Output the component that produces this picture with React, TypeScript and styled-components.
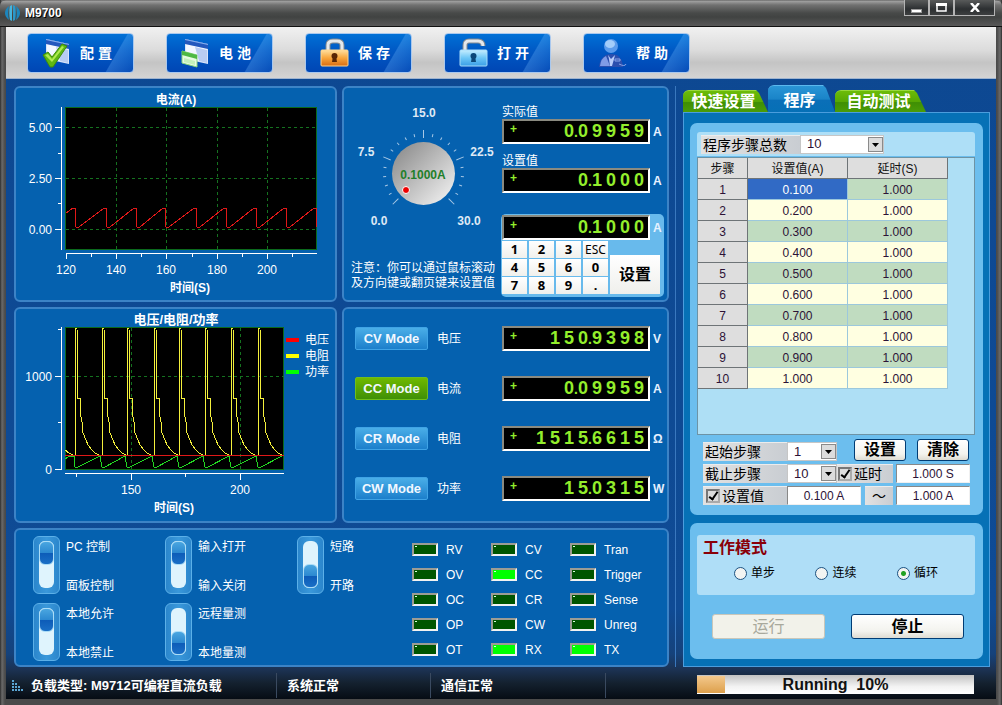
import React from "react";
import styled, { createGlobalStyle, css } from "styled-components";

const GlobalStyle = createGlobalStyle`
  *, *::before, *::after { box-sizing: border-box; }
  body {
    margin: 0;
    background: #3c3c3c;
    font-family: "Liberation Sans", "Noto Sans CJK SC", sans-serif;
    font-size: 12px;
    line-height: 14px;
    color: #fff;
  }
  button, input, select { font: inherit; margin: 0; padding: 0; }
`;

/* ---------- window frame ---------- */

const Window = styled.div`
  display: flex;
  flex-direction: column;
  min-height: 100vh;
  padding: 0 6px 6px;
  background: linear-gradient(90deg, #2c2c2c 0, #6a6a6a 2px, #4a4a4a 5px, #4a4a4a calc(100% - 5px), #6a6a6a calc(100% - 2px), #2c2c2c 100%);
`;

const TitleBar = styled.header`
  display: flex;
  align-items: center;
  gap: 5px;
  height: 27px;
  margin: 0 -6px;
  padding-left: 5px;
  border-radius: 6px 6px 0 0;
  border-bottom: 1px solid #111;
  background: linear-gradient(#555 0, #a2a2a2 1px, #717171 5px, #484a49 13px, #414342 17px, #585858 26px);
`;

const Title = styled.h1`
  flex: 1;
  margin: 0;
  font-size: 12px;
  font-weight: bold;
  text-shadow: 1px 1px 0 #000;
`;

const WindowButtons = styled.div`
  display: flex;
  align-self: flex-start;
  margin-right: 7px;
`;

const WindowButton = styled.button<{ $wide?: boolean }>`
  display: flex;
  align-items: center;
  justify-content: center;
  width: ${(p) => (p.$wide ? 41 : 25)}px;
  height: 16px;
  border: 1px solid #b4b4b4;
  border-top: 0;
  background: linear-gradient(#585a5a, #2c2f31 60%, #3d3f40);
`;

const Content = styled.div`
  flex: 1;
  display: flex;
  flex-direction: column;
  background: linear-gradient(#0d4892 0, #0f4b95 calc(100% - 90px), #15427b calc(100% - 45px), #1c3355 calc(100% - 30px), #14212f calc(100% - 16px), #060c14 100%);
`;

const Toolbar = styled.nav`
  display: flex;
  align-items: center;
  gap: 32px;
  height: 52px;
  padding: 0 21px;
  border-bottom: 1px solid #9fb4d0;
  background: linear-gradient(#f1f1f1, #dcdcdc 45%, #c4c4c4 70%, #d4d4d4);
`;

const ToolButton = styled.button`
  display: flex;
  align-items: center;
  gap: 8px;
  width: 107px;
  height: 40px;
  padding-left: 14px;
  border: 1px solid #a9c8ee;
  border-radius: 4px;
  color: #fff;
  font-size: 14px;
  font-weight: bold;
  line-height: 18px;
  background:
    linear-gradient(120deg, transparent 78%, rgba(120, 190, 255, 0.28) 79%, rgba(120, 190, 255, 0.05) 100%),
    linear-gradient(#0070d6, #0058c4 45%, #0046b4);
`;

const Body = styled.main`
  flex: 1;
  display: grid;
  grid-template-columns: minmax(0, 1fr) 315px;
  gap: 6px;
  padding: 7px 6px 0 8px;
`;

const Bench = styled.div`
  display: grid;
  grid-template-columns: minmax(0, 323fr) minmax(0, 327fr);
  grid-template-rows: 216px 216px 139px;
  gap: 5px;
`;

const Panel = styled.section<{ $wide?: boolean }>`
  display: flex;
  min-width: 0;
  border: 2px solid #3c83c6;
  border-radius: 6px;
  background: #0561af;
  ${(p) => p.$wide && css`grid-column: 1 / -1;`}
`;

/* ---------- charts ---------- */

const ChartSvg = styled.svg`
  display: block;
  flex: none;
  font-size: 12px;
  fill: #fff;
`;

/* ---------- LCD ---------- */

const Lcd = styled.output`
  display: flex;
  flex: none;
  align-items: center;
  width: 148px;
  height: 25px;
  padding: 0 0 0 6px;
  border: 2px solid;
  border-color: #8a8a80 #fff #fff #8a8a80;
  background: #000;
  color: #93ee2c;
  font-size: 18px;
  font-weight: bold;
  line-height: 21px;
`;

const LcdSign = styled.span`
  flex: 1;
  font-size: 12px;
  line-height: 16px;
  align-self: flex-start;
`;

const LcdCell = styled.span`
  display: flex;
  align-items: baseline;
  justify-content: space-between;
  width: 14px;
  height: 21px;
`;

const LcdDot = styled.span`
  width: 4px;
  font-size: 14px;
`;

const Unit = styled.span`
  width: 14px;
  font-weight: bold;
  color: #e6f1ff;
`;

const LcdRow = styled.div`
  display: flex;
  align-items: center;
  gap: 3px;
`;

/* ---------- knob panel ---------- */

const KnobColumn = styled.div`
  flex: 1;
  display: flex;
  flex-direction: column;
  padding: 12px 0 9px 7px;
`;

const Note = styled.p`
  margin: auto 0 0;
  line-height: 15px;
  white-space: nowrap;
`;

const ReadingColumn = styled.div`
  width: 166px;
  padding: 17px 3px 0 0;
`;

const Reading = styled.div`
  margin-bottom: 10px;
  padding-left: 1px;
`;

const ReadingLabel = styled.div`
  height: 14px;
`;

const Keypad = styled.div`
  margin-top: 21px;
  padding: 1px 1px 3px;
  border-radius: 5px;
  background: #68baec;
`;

const KeypadKeys = styled.div`
  display: flex;
  gap: 2px;
  align-items: flex-end;
  margin-top: 1px;
`;

const KeyGrid = styled.div`
  display: grid;
  grid-template-columns: repeat(4, 25px);
  grid-auto-rows: 17px;
  gap: 1px 2px;
`;

const Key = styled.button<{ $text?: boolean }>`
  border: 0;
  background: linear-gradient(#fff, #f0f0ec);
  color: #000;
  font-family: "Noto Sans", sans-serif;
  font-size: ${(p) => (p.$text ? 12 : 13)}px;
  font-weight: ${(p) => (p.$text ? "normal" : "bold")};
  line-height: 17px;
`;

const SetKey = styled.button`
  width: 50px;
  height: 39px;
  border: 0;
  background: linear-gradient(#fff, #efefec);
  color: #000;
  font-size: 16px;
  font-weight: bold;
`;

/* ---------- mode panel ---------- */

const ModeList = styled.div`
  flex: 1;
  display: flex;
  flex-direction: column;
  gap: 25px;
  padding: 17px 0 0 11px;
`;

const ModeRow = styled.div`
  display: flex;
  align-items: center;
  height: 25px;
`;

const ModeButton = styled.button<{ $active: boolean }>`
  width: 73px;
  height: 23px;
  border: 1px solid ${(p) => (p.$active ? "#6fbe1c" : "#3fa3e6")};
  border-radius: 2px;
  color: #f2f8ff;
  font-size: 13px;
  font-weight: bold;
  background: ${(p) => (p.$active ? "linear-gradient(#6fb900, #3f8f06)" : "linear-gradient(#4aaee8, #1c7fcb)")};
`;

const ModeName = styled.span`
  flex: 1;
  padding-left: 9px;
`;

const ModeValue = styled.div`
  width: 165px;
`;

/* ---------- switches and lamps ---------- */

const SwitchGrid = styled.div`
  display: grid;
  grid-template-columns: repeat(3, 132px);
  grid-auto-rows: 58px;
  gap: 9px 0;
  padding: 6px 0 0 17px;
  width: 396px;
  flex: none;
`;

const SwitchLabel = styled.label`
  display: flex;
  gap: 6px;
`;

const SwitchInput = styled.input`
  appearance: none;
  position: relative;
  width: 27px;
  height: 58px;
  border: 1px solid #5cb0e8;
  border-radius: 6px;
  background: linear-gradient(90deg, #2b86cc, #3a98da 50%, #2b86cc);

  &::before {
    content: "";
    position: absolute;
    inset: 4px 5px 5px;
    border-radius: 6px;
    background: #dff4fd;
  }
  &::after {
    content: "";
    position: absolute;
    left: 5px;
    top: 27px;
    width: 15px;
    height: 24px;
    border: 1px solid #a9dcf7;
    border-radius: 6px;
    background: linear-gradient(#4aa6e0, #2b88d0 50%, #0d5cb8 51%, #1a6fc6);
  }
  &:checked::after {
    top: 4px;
  }
`;

const SwitchTexts = styled.span`
  display: flex;
  flex-direction: column;
  justify-content: space-between;
  padding: 4px 0 1px;
`;

const LampGrid = styled.div`
  display: grid;
  grid-template-columns: repeat(3, 79px);
  grid-auto-rows: 25px;
  padding-top: 7px;
`;

const Lamp = styled.div`
  display: flex;
  align-items: center;
  gap: 8px;
  height: 25px;
`;

const LampLight = styled.span<{ $on: boolean }>`
  width: 26px;
  height: 13px;
  border: 2px solid;
  border-color: #9c9c94 #f2f2f2 #f2f2f2 #9c9c94;
  background: ${(p) => (p.$on ? "#00ff00" : "#005500")};
  &::before {
    content: "";
    display: block;
    width: 2px;
    height: 1px;
    margin: 1px;
    background: #d8ffd8;
  }
`;

const LampName = styled.span`
  padding-top: 1px;
`;

/* ---------- sidebar ---------- */

const Sidebar = styled.aside`
  display: flex;
  flex-direction: column;
  padding-left: 7px;
  border-left: 1px solid #3a78be;
`;

const Tabs = styled.div`
  display: flex;
  align-items: flex-end;
  height: 26px;
`;

const Tab = styled.button<{ $active?: boolean; $width: number }>`
  position: relative;
  isolation: isolate;
  width: ${(p) => p.$width}px;
  height: ${(p) => (p.$active ? 27 : 22)}px;
  padding-right: 4px;
  padding-top: ${(p) => (p.$active ? 5 : 1)}px;
  border: 0;
  background: none;
  color: #fff;
  font-size: 16px;
  font-weight: bold;
  line-height: 20px;
  white-space: nowrap;
  &::before {
    content: "";
    position: absolute;
    z-index: -1;
    inset: 0;
    border-top: 1px solid ${(p) => (p.$active ? "#5cb8ee" : "#97d83a")};
    border-radius: 6px 8px 0 0;
    clip-path: polygon(0 0, calc(100% - 12px) 0, calc(100% - 9px) 3px, 100% 100%, 0 100%);
    background: ${(p) =>
      p.$active ? "linear-gradient(#2a95d6, #1a84c8 50%, #0a6fb8 55%, #0670b6)" : "linear-gradient(#6cbc08, #57a804 50%, #3f8f04 55%, #4a9c08)"};
  }
`;

const SidePanel = styled.div`
  flex: 1;
  display: flex;
  flex-direction: column;
  gap: 8px;
  padding: 10px 6px 7px;
  border: 1px solid #4b9ddd;
  background: #0671b6;
`;

const Card = styled.section`
  padding: 9px 8px 10px 7px;
  border-radius: 7px;
  background: #6cbeee;
`;

const ModeCard = styled(Card)`
  flex: 1;
  padding-top: 12px;
`;

const Strip = styled.div`
  display: flex;
  align-items: center;
  height: 24px;
  margin-bottom: 1px;
  padding-left: 4px;
  border-radius: 3px 3px 0 0;
  background: #aedff7;
`;

const greyField = css`
  border-top: 1px solid #ececec;
  background: linear-gradient(90deg, #e2e2e2, #c9cdd2);
  color: #000;
  font-size: 14px;
  line-height: 18px;
`;

const StripLabel = styled.label`
  ${greyField}
  width: 99px;
  height: 19px;
  padding-left: 2px;
`;

const FieldLabel = styled.label`
  ${greyField}
  display: flex;
  align-items: center;
  width: 84px;
  height: 19px;
  padding-left: 2px;
  white-space: nowrap;
`;

const DelayLabel = styled(FieldLabel)`
  width: 56px;
  margin-right: 3px;
  padding-left: 0;
`;

const SelectBox = styled.span<{ $width: number }>`
  position: relative;
  display: inline-flex;
  width: ${(p) => p.$width}px;
  height: 19px;
  svg {
    position: absolute;
    right: 1px;
    top: 2px;
    pointer-events: none;
  }
`;

const Select = styled.select`
  appearance: none;
  width: 100%;
  height: 19px;
  padding-left: 6px;
  border: 1px solid #c6c6c6;
  border-radius: 0;
  background: #fff;
  color: #2c1236;
  font-size: 13px;
`;

const TableBox = styled.div`
  min-height: 278px;
  margin-bottom: 4px;
  border: 1px solid #6d93a5;
  background: #aedff5;
`;

const StepTable = styled.table`
  width: 250px;
  table-layout: fixed;
  border-collapse: separate;
  border-spacing: 0;
  text-align: center;
  th, td {
    height: 21px;
    padding: 2px 0 0;
    border-right: 1px solid #9cc8dc;
    border-bottom: 1px solid #9cc8dc;
    font-size: 12px;
    font-weight: normal;
    line-height: 18px;
  }
  th {
    border-color: #6e7477;
    background: #dedede;
    color: #2c1236;
  }
  thead th { color: #111; }
`;

const Cell = styled.td<{ $tone: "odd" | "even" | "selected" }>`
  background: ${(p) => ({ odd: "#c0dcc0", even: "#ffffe1", selected: "#316ac5" })[p.$tone]};
  color: ${(p) => (p.$tone === "selected" ? "#fff" : "#2c1236")};
`;

const FieldRow = styled.div`
  display: flex;
  align-items: flex-end;
  padding-left: 6px;
  margin-bottom: 3px;
  &:last-child { margin-bottom: 0; }
`;

const Check = styled.input`
  appearance: none;
  position: relative;
  width: 14px;
  height: 14px;
  margin: 0 2px 0 1px;
  border: 2px solid #8c8c8c;
  border-color: #777 #aaa #aaa #777;
  background: #dcdcdc;
  &:checked::after {
    content: "";
    position: absolute;
    left: 3px;
    top: -1px;
    width: 5px;
    height: 10px;
    border: solid #000;
    border-width: 0 2px 2px 0;
    transform: rotate(35deg);
  }
`;

const NumberBox = styled.input`
  width: 74px;
  height: 19px;
  border: 1px solid #f0f0f0;
  border-top-color: #888;
  border-left-color: #888;
  border-radius: 0;
  background: #fff;
  color: #2c1236;
  text-align: center;
`;

const Tilde = styled.span`
  ${greyField}
  width: 28px;
  height: 19px;
  margin: 0 3px 0 4px;
  text-align: center;
`;

const PushButton = styled.button<{ $large?: boolean }>`
  width: ${(p) => (p.$large ? 113 : 52)}px;
  height: ${(p) => (p.$large ? 25 : 22)}px;
  border: 1px solid #003c74;
  border-radius: 3px;
  background: linear-gradient(#fff, #f3f3ee 70%, #dedcd2);
  color: #000;
  font-size: 16px;
  font-weight: bold;
  line-height: 20px;
  &:disabled {
    border-color: #c9c7ba;
    background: #f2f2ea;
    color: #a9a99c;
    font-weight: normal;
  }
`;

const ButtonPair = styled.div`
  display: flex;
  gap: 11px;
  margin-left: 17px;
`;

const RunButtons = styled.div`
  display: flex;
  gap: 26px;
  padding: 19px 0 0 15px;
`;

const ModeGroup = styled.fieldset`
  height: 60px;
  margin: 0;
  padding: 2px 6px 0;
  border: 0;
  border-radius: 3px;
  background: #afdef7;
`;

const ModeLegend = styled.div`
  color: #8a0008;
  font-size: 16px;
  font-weight: bold;
  line-height: 22px;
`;

const RadioRow = styled.div`
  display: flex;
  justify-content: space-between;
  padding: 7px 31px 0;
`;

const RadioLabel = styled.label`
  display: flex;
  align-items: center;
  gap: 4px;
  color: #000;
`;

const Radio = styled.input`
  appearance: none;
  width: 13px;
  height: 13px;
  border: 1px solid #1d5281;
  border-radius: 50%;
  background: #f2f4f2;
  &:checked {
    background: radial-gradient(circle, #21a121 0 2px, #f2f4f2 3px);
  }
`;

/* ---------- status bar ---------- */

const StatusBar = styled.footer`
  display: flex;
  align-items: center;
  height: 32px;
  padding: 5px 22px 0 6px;
  font-size: 13px;
  font-weight: bold;
`;

const StatusCell = styled.div<{ $width: number }>`
  display: flex;
  flex: none;
  align-items: center;
  gap: 7px;
  width: ${(p) => p.$width}px;
  height: 25px;
  padding-left: 10px;
  border-left: 1px solid #3a4a60;
  &:first-child {
    padding-left: 0;
    border-left: 0;
  }
`;

const Progress = styled.div`
  position: relative;
  width: 277px;
  height: 19px;
  margin: 0 0 2px auto;
  background: linear-gradient(#c2c2c2, #f2f2f2 60%, #fff);
  text-align: center;
  color: #111;
  font-size: 16px;
  line-height: 19px;
  white-space: pre;
`;

const ProgressFill = styled.span`
  position: absolute;
  inset: 1px auto 1px 0;
  background: linear-gradient(#f3c88c, #dda04c);
`;

/* ---------- data ---------- */

const readings = [
  { mode: "CV Mode", name: "电压", value: "150.9398", unit: "V", active: false },
  { mode: "CC Mode", name: "电流", value: "0.09959", unit: "A", active: true },
  { mode: "CR Mode", name: "电阻", value: "1515.6615", unit: "Ω", active: false },
  { mode: "CW Mode", name: "功率", value: "15.0315", unit: "W", active: false },
];

const switches: { up: string; down: string; isUp: boolean }[] = [
  { up: "PC 控制", down: "面板控制", isUp: true },
  { up: "输入打开", down: "输入关闭", isUp: true },
  { up: "短路", down: "开路", isUp: false },
  { up: "本地允许", down: "本地禁止", isUp: true },
  { up: "远程量测", down: "本地量测", isUp: false },
];

const lamps = ["RV", "CV", "Tran", "OV", "CC", "Trigger", "OC", "CR", "Sense", "OP", "CW", "Unreg", "OT", "RX", "TX"];
const litLamps = new Set(["CC", "RX", "TX"]);

const keys = ["1", "2", "3", "ESC", "4", "5", "6", "0", "7", "8", "9", "."];

const steps = Array.from({ length: 10 }, (_, i) => ({
  index: i + 1,
  value: ((i + 1) / 10).toFixed(3),
  delay: "1.000",
}));

/* ---------- drawings ---------- */

const Logo = () => (
  <svg width="15" height="16" viewBox="0 0 15 16" aria-hidden="true">
    <path d="M4 1C1 3 0 6 0 8s1 5 4 7c-1-4-1-10 0-14z" fill="#1c86bd" />
    <path d="M11 1c3 2 4 5 4 7s-1 5-4 7c1-4 1-10 0-14z" fill="#1c86bd" />
    <path d="M5 1C4 5 4 11 5 15l2 1V0z" fill="#46b4dd" />
    <path d="M10 1c1 4 1 10 0 14l-2 1V0z" fill="#2c98c9" />
  </svg>
);

const WindowShape = () => (
  <>
    <path d="M4 1l23 5v20L4 21z" fill="#d8e4fb" />
    <path d="M5 6l21 5v14L5 20z" fill="#f3f7ff" />
    <path d="M14 9l12 3v13l-8-2z" fill="#b9ccf2" />
    <path d="M4 1l23 5v5L4 6z" fill="#2458bd" />
    <path d="M4 1l23 5v1L4 2z" fill="#86b0f0" />
  </>
);

const ConfigIcon = () => (
  <svg width="30" height="30" viewBox="0 0 30 30" aria-hidden="true">
    <WindowShape />
    <path d="M1 17l5-3 4 5L20 6l5 2-14 21H8z" fill="#5fb812" stroke="#3e8c08" />
    <path d="M3 17l3-1 4 5L20 8l2 1-12 15z" fill="#b0ea4e" />
  </svg>
);

const BatteryIcon = () => (
  <svg width="30" height="30" viewBox="0 0 30 30" aria-hidden="true">
    <WindowShape />
    <path d="M1 13l15 4v12L1 25z" fill="#e6fbe0" stroke="#8bd67c" />
    <path d="M1 13l15 4v4L1 17z" fill="#4fb944" />
    <path d="M3 20l11 3v4L3 24z" fill="#c4f0bb" />
  </svg>
);

const LockIcon = ({ open }: { open?: boolean }) => {
  const id = open ? "lock-open" : "lock-shut";
  const shackle = open ? "M6 12V7q0-4 4-4h9q5 0 5 5" : "M8 13V7q0-4 5-4h4q5 0 5 4v6";
  return (
    <svg width="30" height="30" viewBox="0 0 30 30" aria-hidden="true">
      <defs>
        <linearGradient id={id} x1="0" y1="0" x2="0" y2="1">
          <stop offset="0" stopColor={open ? "#c6eeff" : "#ffe0a0"} />
          <stop offset="0.5" stopColor={open ? "#6cc6f6" : "#f8a63c"} />
          <stop offset="1" stopColor={open ? "#3a9ee6" : "#d96c12"} />
        </linearGradient>
      </defs>
      <path d={shackle} fill="none" stroke="#7f8790" strokeWidth="5" />
      <path d={shackle} fill="none" stroke="#e4e8ec" strokeWidth="3" />
      <rect x="1" y="12" width="27" height="16" rx="1" fill={`url(#${id})`} stroke={open ? "#a6dcfa" : "#ffd48c"} />
      <circle cx="14.5" cy="18" r="3" fill={open ? "#0b4778" : "#5a2604"} />
      <path d="M13 18h3l1 6h-5z" fill={open ? "#0b4778" : "#5a2604"} />
    </svg>
  );
};

const HelpIcon = () => (
  <svg width="30" height="30" viewBox="0 0 30 30" aria-hidden="true">
    <path d="M1 29q1-9 7-12l5-1h1l5 1q5 3 6 12z" fill="#2c4fae" />
    <path d="M2 28q1-8 6-10l4 10z" fill="#7f9be6" />
    <path d="M10 17l3 4 4-4-1 4-2 7h-2l-1-7z" fill="#b8ccfa" />
    <path d="M17 21h5v2h-5zM21 26q6 3 7 0" fill="none" stroke="#8aa5e8" />
    <circle cx="13" cy="8" r="7" fill="#5c9cec" />
    <ellipse cx="12" cy="6" rx="5" ry="4" fill="#a3cdfa" />
  </svg>
);

const DropArrow = () => (
  <svg width="15" height="15" viewBox="0 0 15 15" aria-hidden="true">
    <rect x="0.5" y="0.5" width="14" height="14" fill="#dcdcdc" stroke="#8a8a8a" />
    <path d="M4 6h7l-3.5 4z" fill="#000" />
  </svg>
);

const sawtooth = () => {
  const peaks = [75, 106, 136, 165, 196, 226, 256, 286, 316];
  const points = ["66,213"];
  peaks.forEach((x, i) => {
    points.push(`${x - 2},208`, `${x},208`, `${x + 1},227`);
    if (i < peaks.length - 1) points.push(`${x + 4},227`);
  });
  return points.join(" ");
};

const rises = [75, 102, 127, 154, 179, 205, 231, 258, 284];
const decay: [number, number][] = [
  [3, 398], [5, 398], [5, 411], [7, 422], [8, 433], [11, 440], [13, 445], [17, 450], [20, 453], [24, 455],
];

const resistanceLine = () => {
  const points = ["65,450", "69,453", "73,455"];
  rises.slice(0, -1).forEach((x) => {
    points.push(`${x},455`, `${x},328`, `${x + 2},328`);
    decay.forEach(([dx, y]) => points.push(`${x + dx},${y}`));
  });
  return points.join(" ");
};

const powerLine = () => {
  const points = ["65,459", "70,456", "74,456"];
  rises.slice(0, -1).forEach((x, i) => {
    points.push(`${x},467`, `${x + 3},467`, `${rises[i + 1] - 2},456`);
  });
  return points.join(" ");
};

const CurrentChart = () => (
  <ChartSvg width="319" height="212" viewBox="16 88 319 212" role="img" aria-label="电流(A)">
    <rect x="65.5" y="107.5" width="251" height="142" fill="#000" stroke="#0b6a1c" />
    <g stroke="#14721f" strokeDasharray="3 3" shapeRendering="crispEdges">
      {[127, 178, 229].map((y) => <path key={y} d={`M66 ${y}.5H317`} />)}
      {[116, 166, 217, 267].map((x) => <path key={x} d={`M${x}.5 108V249`} />)}
    </g>
    <polyline points={sawtooth()} fill="none" stroke="#e01818" shapeRendering="crispEdges" />
    <path
      d="M61.5 107V250M55 127.5h6M55 178.5h6M55 229.5h6M58 153.5h3M58 203.5h3M66 253.5H317M66.5 254v5M116.5 254v5M166.5 254v5M217.5 254v5M267.5 254v5M91.5 254v3M141.5 254v3M192.5 254v3M242.5 254v3M292.5 254v3"
      stroke="#fff"
      fill="none"
    />
    <g textAnchor="end">
      <text x="52" y="132">5.00</text>
      <text x="52" y="183">2.50</text>
      <text x="52" y="234">0.00</text>
    </g>
    <g textAnchor="middle">
      <text x="66" y="274">120</text>
      <text x="116" y="274">140</text>
      <text x="166" y="274">160</text>
      <text x="217" y="274">180</text>
      <text x="267" y="274">200</text>
      <g fontWeight="bold">
        <text x="176" y="104">电流(A)</text>
        <text x="190" y="292">时间(S)</text>
      </g>
    </g>
  </ChartSvg>
);

const PowerChart = () => (
  <ChartSvg width="319" height="212" viewBox="16 309 319 212" role="img" aria-label="电压/电阻/功率">
    <rect x="65.5" y="327.5" width="218" height="142" fill="#000" stroke="#0b6a1c" />
    <path d="M66 376.5H284M131.5 328V469M240.5 328V469" stroke="#14721f" strokeDasharray="3 3" />
    <g fill="none" shapeRendering="crispEdges">
      <polyline points={powerLine()} stroke="#22d822" />
      <polyline points={resistanceLine()} stroke="#f4f03c" />
      <path d="M65 455.5H284" stroke="#e01818" />
    </g>
    <path
      d="M61.5 327V470M58 329.5h3M55 376.5h6M58 422.5h3M55 469.5h6M65 473.5H284M131.5 474v6M240.5 474v6M76.5 474v3M185.5 474v3"
      stroke="#fff"
      fill="none"
    />
    <g textAnchor="end">
      <text x="52" y="381">1000</text>
      <text x="52" y="474">0</text>
    </g>
    <g textAnchor="middle">
      <text x="131" y="494">150</text>
      <text x="240" y="494">200</text>
      <g fontWeight="bold">
        <text x="176" y="324" fontSize="13">电压/电阻/功率</text>
        <text x="174" y="512">时间(S)</text>
      </g>
    </g>
    <rect x="286" y="338" width="13" height="4" fill="#f00" />
    <rect x="286" y="354" width="13" height="4" fill="#ff0" />
    <rect x="286" y="370" width="13" height="4" fill="#0f0" />
    <text x="305" y="344">电压</text>
    <text x="305" y="360">电阻</text>
    <text x="305" y="376">功率</text>
  </ChartSvg>
);

const Knob = () => (
  <ChartSvg width="149" height="132" viewBox="351 100 149 132" role="img" aria-label="0.1000A">
    <defs>
      <linearGradient id="knob-face" x1="0.1" y1="0.1" x2="0.9" y2="0.9">
        <stop offset="0" stopColor="#8f8f8f" />
        <stop offset="1" stopColor="#ececec" />
      </linearGradient>
    </defs>
    <g stroke="#a8c8e6">
      {Array.from({ length: 21 }, (_, i) => {
        const major = i % 5 === 0;
        return (
          <path key={i} d={major ? "M423.5 130v8" : "M423.5 133v3"} transform={`rotate(${-135 + i * 13.5} 423.5 173.5)`} />
        );
      })}
    </g>
    <circle cx="423.5" cy="173.5" r="31.5" fill="url(#knob-face)" />
    <circle cx="406" cy="190" r="3.5" fill="#e00" stroke="#fff" />
    <g textAnchor="middle" fontWeight="bold" fill="#dfe9f5">
      <text x="423" y="179" fill="#1f7f2a">0.1000A</text>
      <text x="424" y="117">15.0</text>
      <text x="366" y="156">7.5</text>
      <text x="482" y="156">22.5</text>
      <text x="379" y="225">0.0</text>
      <text x="469" y="225">30.0</text>
    </g>
  </ChartSvg>
);

const StatusIcon = () => (
  <svg width="12" height="12" viewBox="0 0 12 12" fill="#5ba6d4" aria-hidden="true">
    {[[0, 0], [0, 3], [3, 3], [0, 6], [3, 6], [6, 6], [0, 9], [3, 9], [6, 9], [9, 9]].map(([x, y]) => (
      <rect key={`${x}-${y}`} x={x} y={y} width="2" height="2" />
    ))}
  </svg>
);

/* ---------- composed parts ---------- */

/* Each digit owns one cell; a decimal point shares the cell of the digit before it. */
const Display = ({ value, unit }: { value: string; unit: string }) => (
  <LcdRow>
    <Lcd>
      <LcdSign>+</LcdSign>
      {(value.match(/\d\.?/g) ?? []).map((cell, i) => (
        <LcdCell key={i}>
          <span>{cell[0]}</span>
          {cell[1] && <LcdDot>.</LcdDot>}
        </LcdCell>
      ))}
    </Lcd>
    <Unit>{unit}</Unit>
  </LcdRow>
);

const Dropdown = ({ id, value, width }: { id: string; value: string; width: number }) => (
  <SelectBox $width={width}>
    <Select id={id} defaultValue={value}>
      {steps.map((s) => <option key={s.index}>{s.index}</option>)}
    </Select>
    <DropArrow />
  </SelectBox>
);

const toolbarItems = [
  { text: "配 置", icon: <ConfigIcon /> },
  { text: "电 池", icon: <BatteryIcon /> },
  { text: "保 存", icon: <LockIcon /> },
  { text: "打 开", icon: <LockIcon open /> },
  { text: "帮 助", icon: <HelpIcon /> },
];

export default function App() {
  return (
    <>
      <GlobalStyle />
      <Window>
        <TitleBar>
          <Logo />
          <Title>M9700</Title>
          <WindowButtons>
            <WindowButton aria-label="最小化">
              <svg width="11" height="10"><rect x="0.5" y="6.5" width="10" height="3" fill="#fff" stroke="#999" /></svg>
            </WindowButton>
            <WindowButton aria-label="最大化">
              <svg width="11" height="9"><path d="M1 1h9v7H1z" fill="none" stroke="#fff" strokeWidth="1.5" /><path d="M0 0h11v3H0z" fill="#fff" /></svg>
            </WindowButton>
            <WindowButton $wide aria-label="关闭">
              <svg width="10" height="9"><path d="M1 0l8 9M9 0L1 9" stroke="#fff" strokeWidth="2.5" /></svg>
            </WindowButton>
          </WindowButtons>
        </TitleBar>
        <Content>
          <Toolbar>
            {toolbarItems.map((item) => (
              <ToolButton key={item.text}>{item.icon}{item.text}</ToolButton>
            ))}
          </Toolbar>
          <Body>
            <Bench>
              <Panel><CurrentChart /></Panel>
              <Panel>
                <KnobColumn>
                  <Knob />
                  <Note>注意：你可以通过鼠标滚动<br />及方向键或翻页键来设置值</Note>
                </KnobColumn>
                <ReadingColumn>
                  <Reading>
                    <ReadingLabel>实际值</ReadingLabel>
                    <Display value="0.09959" unit="A" />
                  </Reading>
                  <Reading>
                    <ReadingLabel>设置值</ReadingLabel>
                    <Display value="0.1000" unit="A" />
                  </Reading>
                  <Keypad>
                    <Display value="0.1000" unit="A" />
                    <KeypadKeys>
                      <KeyGrid>
                        {keys.map((k) => <Key key={k} $text={k === "ESC"}>{k}</Key>)}
                      </KeyGrid>
                      <SetKey>设置</SetKey>
                    </KeypadKeys>
                  </Keypad>
                </ReadingColumn>
              </Panel>
              <Panel><PowerChart /></Panel>
              <Panel>
                <ModeList>
                  {readings.map((r) => (
                    <ModeRow key={r.mode}>
                      <ModeButton $active={r.active}>{r.mode}</ModeButton>
                      <ModeName>{r.name}</ModeName>
                      <ModeValue><Display value={r.value} unit={r.unit} /></ModeValue>
                    </ModeRow>
                  ))}
                </ModeList>
              </Panel>
              <Panel $wide>
                <SwitchGrid>
                  {switches.map((s) => (
                    <SwitchLabel key={s.up}>
                      <SwitchInput type="checkbox" role="switch" defaultChecked={s.isUp} />
                      <SwitchTexts><span>{s.up}</span><span>{s.down}</span></SwitchTexts>
                    </SwitchLabel>
                  ))}
                </SwitchGrid>
                <LampGrid>
                  {lamps.map((name) => (
                    <Lamp key={name}>
                      <LampLight $on={litLamps.has(name)} />
                      <LampName>{name}</LampName>
                    </Lamp>
                  ))}
                </LampGrid>
              </Panel>
            </Bench>
            <Sidebar>
              <Tabs role="tablist">
                <Tab role="tab" $width={85}>快速设置</Tab>
                <Tab role="tab" aria-selected $active $width={67}>程序</Tab>
                <Tab role="tab" $width={91}>自动测试</Tab>
              </Tabs>
              <SidePanel>
                <Card>
                  <Strip>
                    <StripLabel htmlFor="total">程序步骤总数</StripLabel>
                    <Dropdown id="total" value="10" width={84} />
                  </Strip>
                  <TableBox>
                    <StepTable>
                      <colgroup>
                        <col style={{ width: "20%" }} />
                        <col style={{ width: "40%" }} />
                        <col style={{ width: "40%" }} />
                      </colgroup>
                      <thead>
                        <tr><th>步骤</th><th>设置值(A)</th><th>延时(S)</th></tr>
                      </thead>
                      <tbody>
                        {steps.map((s) => {
                          const tone = s.index % 2 ? "odd" : "even";
                          return (
                            <tr key={s.index}>
                              <th scope="row">{s.index}</th>
                              <Cell $tone={s.index === 1 ? "selected" : tone}>{s.value}</Cell>
                              <Cell $tone={tone}>{s.delay}</Cell>
                            </tr>
                          );
                        })}
                      </tbody>
                    </StepTable>
                  </TableBox>
                  <FieldRow>
                    <FieldLabel htmlFor="first">起始步骤</FieldLabel>
                    <Dropdown id="first" value="1" width={50} />
                    <ButtonPair>
                      <PushButton>设置</PushButton>
                      <PushButton>清除</PushButton>
                    </ButtonPair>
                  </FieldRow>
                  <FieldRow>
                    <FieldLabel htmlFor="last">截止步骤</FieldLabel>
                    <Dropdown id="last" value="10" width={50} />
                    <DelayLabel><Check type="checkbox" defaultChecked />延时</DelayLabel>
                    <NumberBox aria-label="延时" defaultValue="1.000 S" />
                  </FieldRow>
                  <FieldRow>
                    <FieldLabel><Check type="checkbox" defaultChecked />设置值</FieldLabel>
                    <NumberBox aria-label="设置值下限" defaultValue="0.100 A" />
                    <Tilde>～</Tilde>
                    <NumberBox aria-label="设置值上限" defaultValue="1.000 A" />
                  </FieldRow>
                </Card>
                <ModeCard>
                  <ModeGroup aria-labelledby="work-mode">
                    <ModeLegend id="work-mode">工作模式</ModeLegend>
                    <RadioRow>
                      <RadioLabel><Radio type="radio" name="work" />单步</RadioLabel>
                      <RadioLabel><Radio type="radio" name="work" />连续</RadioLabel>
                      <RadioLabel><Radio type="radio" name="work" defaultChecked />循环</RadioLabel>
                    </RadioRow>
                  </ModeGroup>
                  <RunButtons>
                    <PushButton $large disabled>运行</PushButton>
                    <PushButton $large>停止</PushButton>
                  </RunButtons>
                </ModeCard>
              </SidePanel>
            </Sidebar>
          </Body>
          <StatusBar>
            <StatusCell $width={264}><StatusIcon />负载类型: M9712可编程直流负载</StatusCell>
            <StatusCell $width={154}>系统正常</StatusCell>
            <StatusCell $width={175}>通信正常</StatusCell>
            <StatusCell $width={10} />
            <Progress role="progressbar" aria-valuenow={10} aria-label="Running">
              <ProgressFill style={{ width: "10%" }} />
              {"Running  10%"}
            </Progress>
          </StatusBar>
        </Content>
      </Window>
    </>
  );
}
